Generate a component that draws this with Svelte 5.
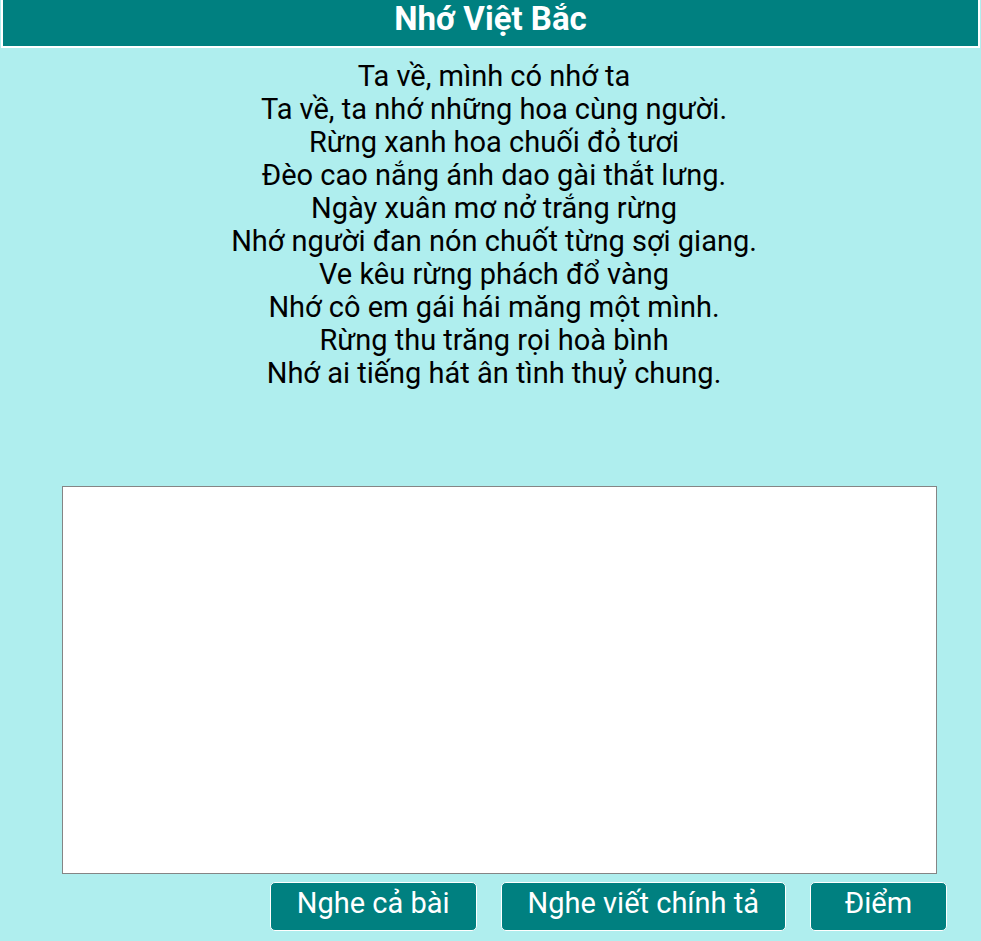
<script lang="ts">
  const title = "Nhớ Việt Bắc";
  const lines = [
    "Ta về, mình có nhớ ta",
    "Ta về, ta nhớ những hoa cùng người.",
    "Rừng xanh hoa chuối đỏ tươi",
    "Đèo cao nắng ánh dao gài thắt lưng.",
    "Ngày xuân mơ nở trắng rừng",
    "Nhớ người đan nón chuốt từng sợi giang.",
    "Ve kêu rừng phách đổ vàng",
    "Nhớ cô em gái hái măng một mình.",
    "Rừng thu trăng rọi hoà bình",
    "Nhớ ai tiếng hát ân tình thuỷ chung.",
  ];
  let answer = "";
</script>

<main>
  <h1>{title}</h1>
  <div class="poem">
    {#each lines as line}
      <p>{line}</p>
    {/each}
  </div>
  <div class="dictation">
    <textarea aria-label="Bài viết chính tả" bind:value={answer}></textarea>
  </div>
  <div class="actions">
    <button type="button">Nghe cả bài</button>
    <button type="button">Nghe viết chính tả</button>
    <button type="button">Điểm</button>
  </div>
</main>

<style>
  :global(body) {
    background: #afeeee;
  }
  main {
    font-family: Roboto, sans-serif;
    color: #000;
  }
  h1 {
    height: 48px;
    box-sizing: border-box;
    margin: 0 1px;
    border: 2px solid #fff;
    border-top: none;
    background: #008080;
    color: #fff;
    font-size: 33px;
    line-height: 38px;
    font-weight: 700;
    text-align: center;
  }
  .poem {
    min-height: 414px;
    padding: 12px 0 12px 7px;
    font-size: 29px;
    line-height: 33px;
    text-align: center;
  }
  p {
    margin: 0;
  }
  .dictation {
    display: flex;
    padding: 0 44px 0 62px;
  }
  textarea {
    flex: 1;
    box-sizing: border-box;
    height: 388px;
    margin: 0;
    padding: 4px;
    border: 1px solid #858585;
    border-radius: 0;
    outline: none;
    resize: none;
    font-family: inherit;
    font-size: 29px;
    line-height: 33px;
  }
  .actions {
    display: flex;
    justify-content: flex-end;
    gap: 24px;
    padding: 8px 34px 10px;
  }
  button {
    height: 49px;
    min-width: 137px;
    padding: 0 26px 6px;
    border: 1px solid #fff;
    border-radius: 5px;
    background: #008080;
    color: #fff;
    font-family: inherit;
    font-size: 29px;
    line-height: 33px;
    cursor: pointer;
  }
</style>
